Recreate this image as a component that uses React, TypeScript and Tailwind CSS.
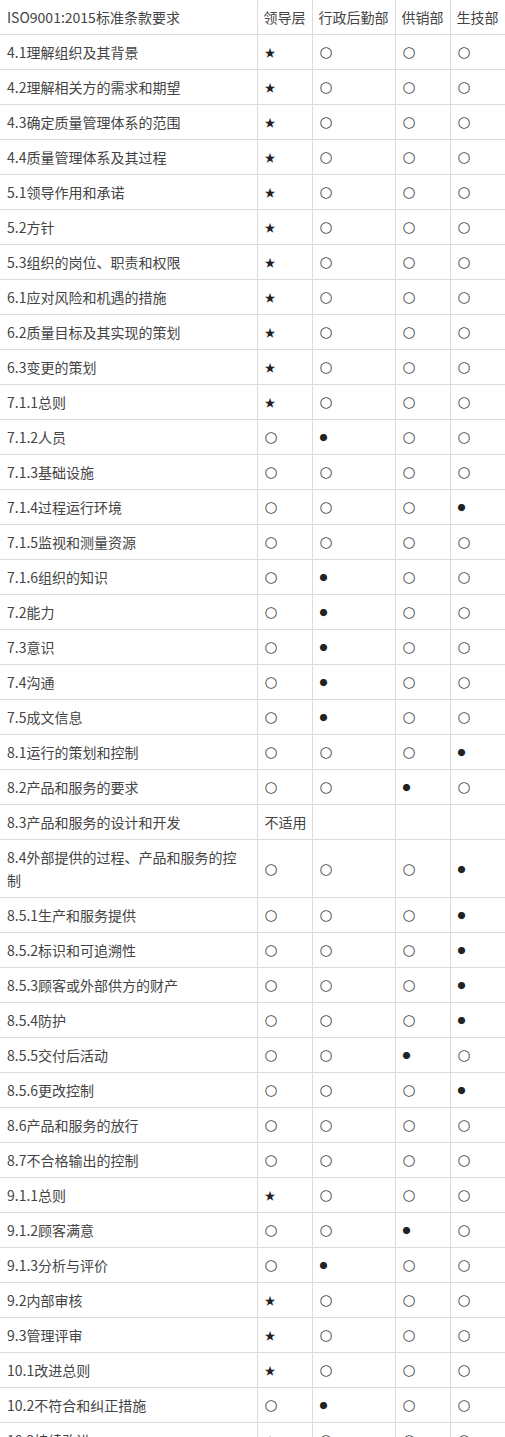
import React from 'react';

type Row = { clause: string; marks: string[] };

// ★ 主导, ● 主要负责, ○ 相关
const rows: Row[] = [
  { clause: '4.1理解组织及其背景', marks: ['★', '○', '○', '○'] },
  { clause: '4.2理解相关方的需求和期望', marks: ['★', '○', '○', '○'] },
  { clause: '4.3确定质量管理体系的范围', marks: ['★', '○', '○', '○'] },
  { clause: '4.4质量管理体系及其过程', marks: ['★', '○', '○', '○'] },
  { clause: '5.1领导作用和承诺', marks: ['★', '○', '○', '○'] },
  { clause: '5.2方针', marks: ['★', '○', '○', '○'] },
  { clause: '5.3组织的岗位、职责和权限', marks: ['★', '○', '○', '○'] },
  { clause: '6.1应对风险和机遇的措施', marks: ['★', '○', '○', '○'] },
  { clause: '6.2质量目标及其实现的策划', marks: ['★', '○', '○', '○'] },
  { clause: '6.3变更的策划', marks: ['★', '○', '○', '○'] },
  { clause: '7.1.1总则', marks: ['★', '○', '○', '○'] },
  { clause: '7.1.2人员', marks: ['○', '●', '○', '○'] },
  { clause: '7.1.3基础设施', marks: ['○', '○', '○', '○'] },
  { clause: '7.1.4过程运行环境', marks: ['○', '○', '○', '●'] },
  { clause: '7.1.5监视和测量资源', marks: ['○', '○', '○', '○'] },
  { clause: '7.1.6组织的知识', marks: ['○', '●', '○', '○'] },
  { clause: '7.2能力', marks: ['○', '●', '○', '○'] },
  { clause: '7.3意识', marks: ['○', '●', '○', '○'] },
  { clause: '7.4沟通', marks: ['○', '●', '○', '○'] },
  { clause: '7.5成文信息', marks: ['○', '●', '○', '○'] },
  { clause: '8.1运行的策划和控制', marks: ['○', '○', '○', '●'] },
  { clause: '8.2产品和服务的要求', marks: ['○', '○', '●', '○'] },
  { clause: '8.3产品和服务的设计和开发', marks: ['不适用', '', '', ''] },
  { clause: '8.4外部提供的过程、产品和服务的控制', marks: ['○', '○', '○', '●'] },
  { clause: '8.5.1生产和服务提供', marks: ['○', '○', '○', '●'] },
  { clause: '8.5.2标识和可追溯性', marks: ['○', '○', '○', '●'] },
  { clause: '8.5.3顾客或外部供方的财产', marks: ['○', '○', '○', '●'] },
  { clause: '8.5.4防护', marks: ['○', '○', '○', '●'] },
  { clause: '8.5.5交付后活动', marks: ['○', '○', '●', '○'] },
  { clause: '8.5.6更改控制', marks: ['○', '○', '○', '●'] },
  { clause: '8.6产品和服务的放行', marks: ['○', '○', '○', '○'] },
  { clause: '8.7不合格输出的控制', marks: ['○', '○', '○', '○'] },
  { clause: '9.1.1总则', marks: ['★', '○', '○', '○'] },
  { clause: '9.1.2顾客满意', marks: ['○', '○', '●', '○'] },
  { clause: '9.1.3分析与评价', marks: ['○', '●', '○', '○'] },
  { clause: '9.2内部审核', marks: ['★', '○', '○', '○'] },
  { clause: '9.3管理评审', marks: ['★', '○', '○', '○'] },
  { clause: '10.1改进总则', marks: ['★', '○', '○', '○'] },
  { clause: '10.2不符合和纠正措施', marks: ['○', '●', '○', '○'] },
  { clause: '10.3持续改进', marks: ['★', '○', '○', '○'] },
];

const headers = ['领导层', '行政后勤部', '供销部', '生技部'];

const Mark: React.FC<{ value: string }> = ({ value }) => {
  if (value === '★') return <span className="inline-block h-[23px] leading-[23px] align-top text-[11px] text-[#222]">★</span>;
  if (value === '○')
    return (
      <span
        className="inline-block h-[23px] leading-[23px] align-top text-[15px] text-[#444]"
        style={{ fontFamily: '"DejaVu Sans", sans-serif' }}
      >
        ○
      </span>
    );
  if (value === '●') return <span className="inline-block h-[23px] leading-[23px] align-top text-[8px] text-[#222]">●</span>;
  return <span className="inline-block h-[23px] leading-[23px] align-top">{value}</span>;
};

export default function App() {
  return (
    <div className="w-[505px] h-[1437px] overflow-hidden bg-white">
      <table
        className="table-fixed border-collapse w-[505px] text-[14px] leading-[23px] text-[#444]"
        style={{ fontFamily: '"Noto Sans CJK SC", "Noto Sans", sans-serif' }}
      >
        <colgroup>
          <col className="w-[257px]" />
          <col className="w-[55px]" />
          <col className="w-[83px]" />
          <col className="w-[55px]" />
          <col className="w-[55px]" />
        </colgroup>
        <thead>
          <tr>
            <td className="border-b border-r border-[#dcdcdc] pl-[7px] pr-[7px] pt-[6px] pb-[5px]">
              ISO9001:2015标准条款要求
            </td>
            {headers.map((h) => (
              <td
                key={h}
                className="border-b border-r border-[#dcdcdc] pl-[6px] pr-[2px] pt-[6px] pb-[5px] whitespace-nowrap"
              >
                {h}
              </td>
            ))}
          </tr>
        </thead>
        <tbody>
          {rows.map((r) => (
            <tr key={r.clause}>
              <td className="border-b border-r border-[#dcdcdc] pl-[7px] pr-[7px] pt-[6px] pb-[5px]">
                {r.clause}
              </td>
              {r.marks.map((m, i) => (
                <td
                  key={i}
                  className="border-b border-r border-[#dcdcdc] pl-[7px] pr-[2px] pt-[6px] pb-[5px] whitespace-nowrap"
                >
                  <Mark value={m} />
                </td>
              ))}
            </tr>
          ))}
        </tbody>
      </table>
    </div>
  );
}
